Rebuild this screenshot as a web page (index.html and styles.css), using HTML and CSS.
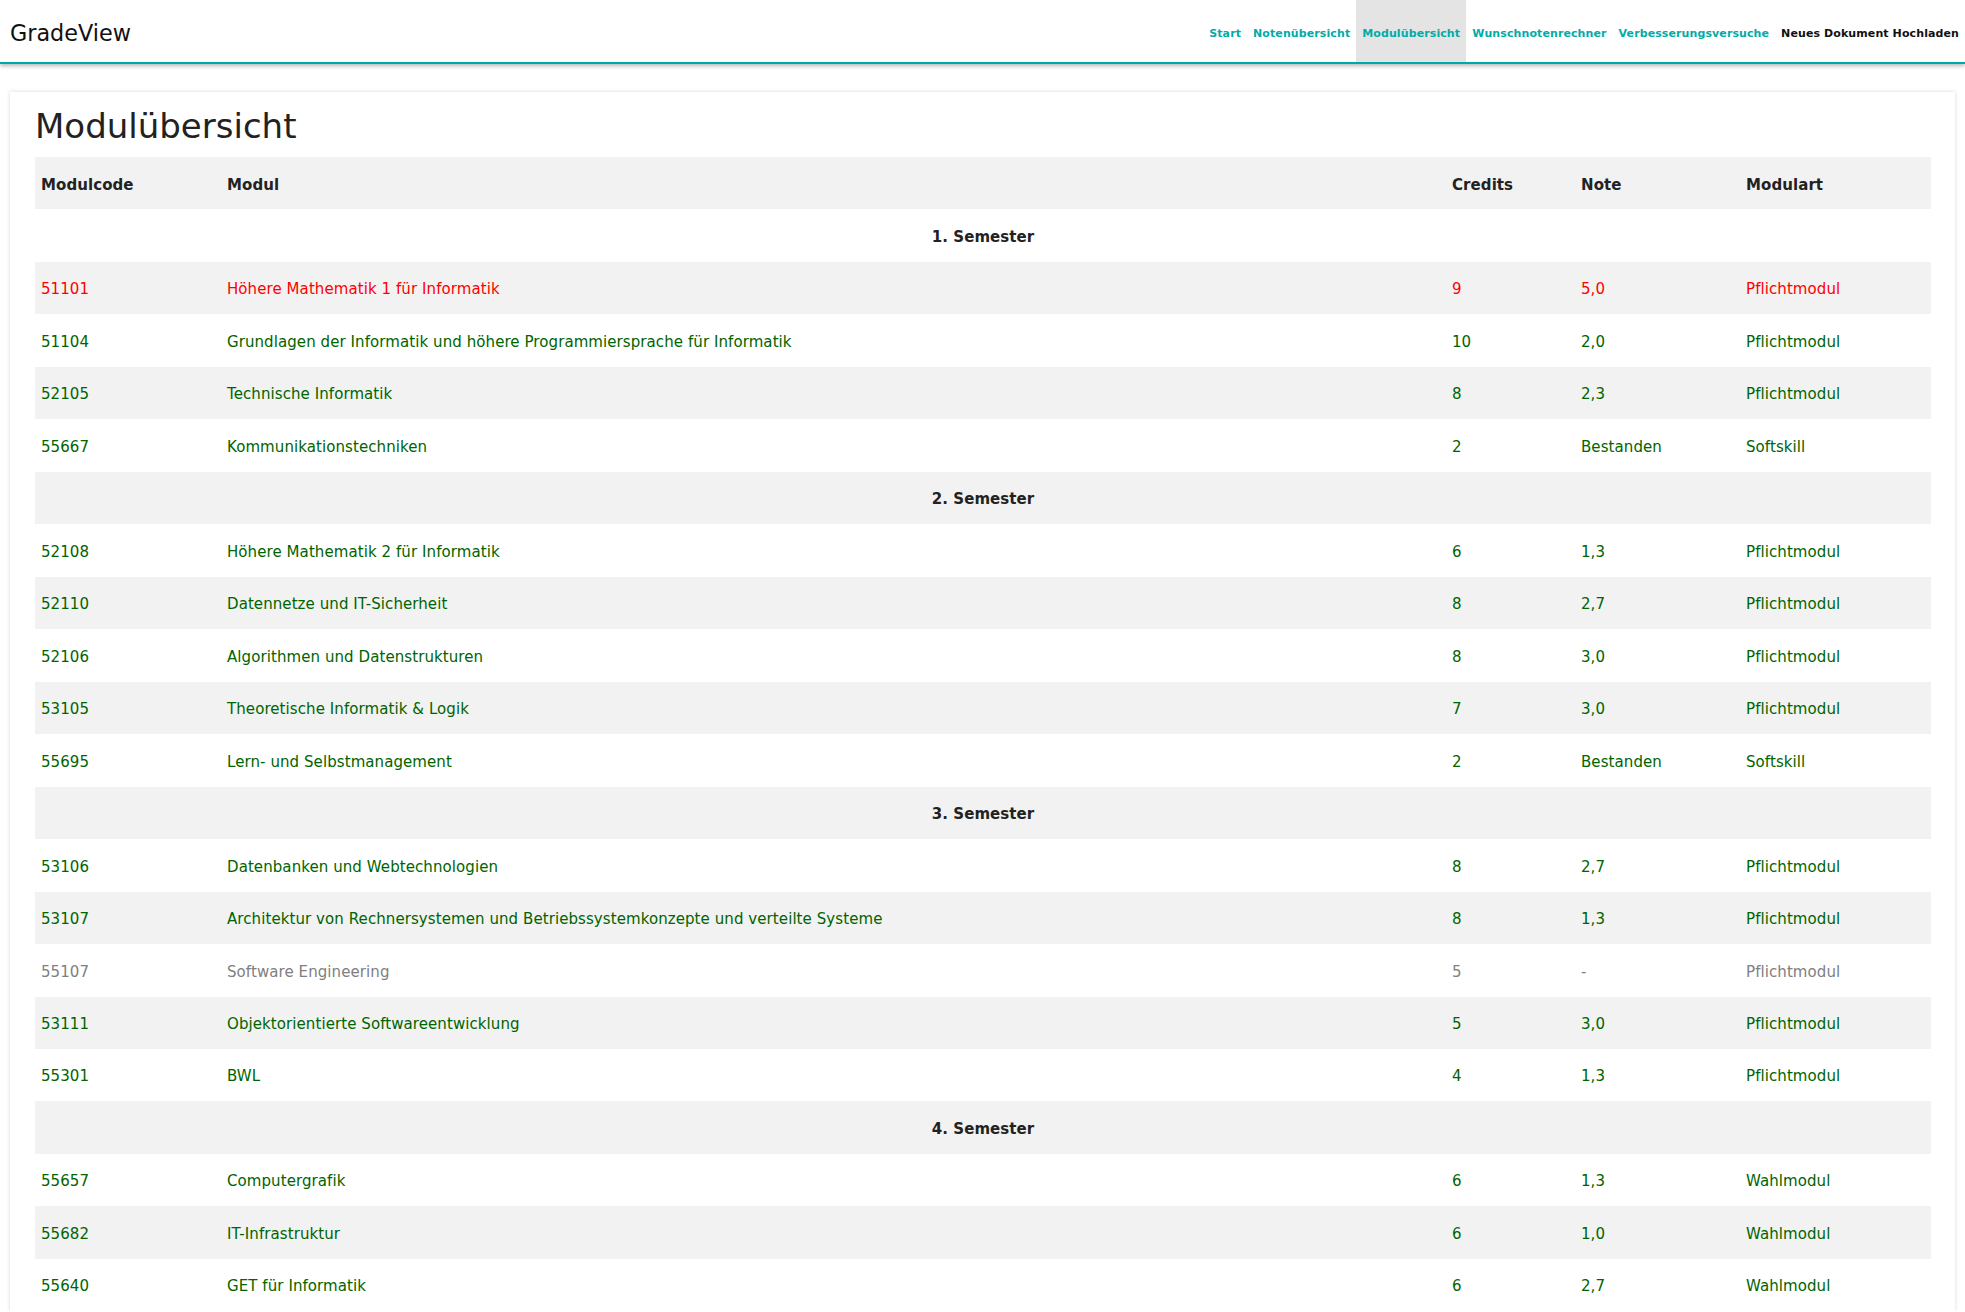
FILE: index.html
```html
<!DOCTYPE html>
<html lang="de">
<head>
<meta charset="utf-8">
<title>GradeView – Modulübersicht</title>
<link rel="stylesheet" href="styles.css">
</head>
<body>
<header class="topbar">
  <div class="brand">GradeView</div>
  <nav class="nav">
    <a class="nav-link" href="#">Start</a>
    <a class="nav-link" href="#">Notenübersicht</a>
    <a class="nav-link active" href="#">Modulübersicht</a>
    <a class="nav-link" href="#">Wunschnotenrechner</a>
    <a class="nav-link" href="#">Verbesserungsversuche</a>
    <a class="nav-link upload" href="#">Neues Dokument Hochladen</a>
  </nav>
</header>
<main class="page">
  <section class="card">
    <h1 class="title">Modulübersicht</h1>
    <table class="modules">
      <colgroup>
        <col class="c-code"><col class="c-name"><col class="c-credits"><col class="c-note"><col class="c-art">
      </colgroup>
      <thead>
        <tr><th>Modulcode</th><th>Modul</th><th>Credits</th><th>Note</th><th>Modulart</th></tr>
      </thead>
      <tbody>
        <tr class="sem"><td colspan="5">1. Semester</td></tr>
        <tr class="failed"><td>51101</td><td>Höhere Mathematik 1 für Informatik</td><td>9</td><td>5,0</td><td>Pflichtmodul</td></tr>
        <tr class="passed"><td>51104</td><td>Grundlagen der Informatik und höhere Programmiersprache für Informatik</td><td>10</td><td>2,0</td><td>Pflichtmodul</td></tr>
        <tr class="passed"><td>52105</td><td>Technische Informatik</td><td>8</td><td>2,3</td><td>Pflichtmodul</td></tr>
        <tr class="passed"><td>55667</td><td>Kommunikationstechniken</td><td>2</td><td>Bestanden</td><td>Softskill</td></tr>
        <tr class="sem"><td colspan="5">2. Semester</td></tr>
        <tr class="passed"><td>52108</td><td>Höhere Mathematik 2 für Informatik</td><td>6</td><td>1,3</td><td>Pflichtmodul</td></tr>
        <tr class="passed"><td>52110</td><td>Datennetze und IT-Sicherheit</td><td>8</td><td>2,7</td><td>Pflichtmodul</td></tr>
        <tr class="passed"><td>52106</td><td>Algorithmen und Datenstrukturen</td><td>8</td><td>3,0</td><td>Pflichtmodul</td></tr>
        <tr class="passed"><td>53105</td><td>Theoretische Informatik &amp; Logik</td><td>7</td><td>3,0</td><td>Pflichtmodul</td></tr>
        <tr class="passed"><td>55695</td><td>Lern- und Selbstmanagement</td><td>2</td><td>Bestanden</td><td>Softskill</td></tr>
        <tr class="sem"><td colspan="5">3. Semester</td></tr>
        <tr class="passed"><td>53106</td><td>Datenbanken und Webtechnologien</td><td>8</td><td>2,7</td><td>Pflichtmodul</td></tr>
        <tr class="passed"><td>53107</td><td>Architektur von Rechnersystemen und Betriebssystemkonzepte und verteilte Systeme</td><td>8</td><td>1,3</td><td>Pflichtmodul</td></tr>
        <tr class="open"><td>55107</td><td>Software Engineering</td><td>5</td><td>-</td><td>Pflichtmodul</td></tr>
        <tr class="passed"><td>53111</td><td>Objektorientierte Softwareentwicklung</td><td>5</td><td>3,0</td><td>Pflichtmodul</td></tr>
        <tr class="passed"><td>55301</td><td>BWL</td><td>4</td><td>1,3</td><td>Pflichtmodul</td></tr>
        <tr class="sem"><td colspan="5">4. Semester</td></tr>
        <tr class="passed"><td>55657</td><td>Computergrafik</td><td>6</td><td>1,3</td><td>Wahlmodul</td></tr>
        <tr class="passed"><td>55682</td><td>IT-Infrastruktur</td><td>6</td><td>1,0</td><td>Wahlmodul</td></tr>
        <tr class="passed"><td>55640</td><td>GET für Informatik</td><td>6</td><td>2,7</td><td>Wahlmodul</td></tr>
      </tbody>
    </table>
  </section>
</main>
</body>
</html>
```

FILE: styles.css
```css
* { box-sizing: border-box; }

html, body {
  margin: 0;
  padding: 0;
  background: #ffffff;
  font-family: "DejaVu Sans", Verdana, sans-serif;
  color: #222222;
}

.topbar {
  position: relative;
  z-index: 2;
  display: flex;
  justify-content: space-between;
  align-items: stretch;
  height: 64px;
  background: #ffffff;
  border-bottom: 2px solid #00a9a9;
  box-shadow: 0 2px 4px rgba(0, 0, 0, 0.28);
}

.brand {
  display: flex;
  align-items: center;
  padding: 4px 0 0 10px;
  font-size: 22.3px;
  color: #111111;
}

.nav {
  display: flex;
  align-items: stretch;
}

.nav-link {
  display: flex;
  align-items: center;
  padding: 4px 6px 0 6px;
  font-size: 11px;
  font-weight: bold;
  color: #00aca8;
  text-decoration: none;
  letter-spacing: 0.1px;
}

.nav-link.active {
  background: #e4e4e4;
}

.nav-link.upload {
  color: #111111;
}

.page {
  padding: 28px 10px 0 10px;
}

.card {
  background: #ffffff;
  padding: 14px 24px 0 25px;
  box-shadow: 0 0 4px rgba(0, 0, 0, 0.16);
}

.title {
  margin: 0 0 11px 0;
  font-size: 34px;
  line-height: 40px;
  font-weight: normal;
  color: #222222;
}

.modules {
  width: 1896px;
  border-collapse: collapse;
  table-layout: fixed;
  font-size: 15px;
  line-height: 17.5px;
  letter-spacing: 0.08px;
}

.c-code { width: 186px; }
.c-name { width: 1225px; }
.c-credits { width: 129px; }
.c-note { width: 165px; }
.c-art { width: 191px; }

.modules th,
.modules td {
  height: 52.47px;
  padding: 19.5px 6px 15.47px 6px;
  text-align: left;
  white-space: nowrap;
}

.modules thead tr {
  background: #f2f2f2;
}

.modules th {
  font-weight: bold;
  color: #222222;
}

.modules tbody tr:nth-child(even) {
  background: #f2f2f2;
}

.modules tr.sem td {
  text-align: center;
  font-weight: bold;
  color: #222222;
}

.modules tr.passed td { color: #006400; }
.modules tr.failed td { color: #ff0000; }
.modules tr.open td { color: #808080; }
```
